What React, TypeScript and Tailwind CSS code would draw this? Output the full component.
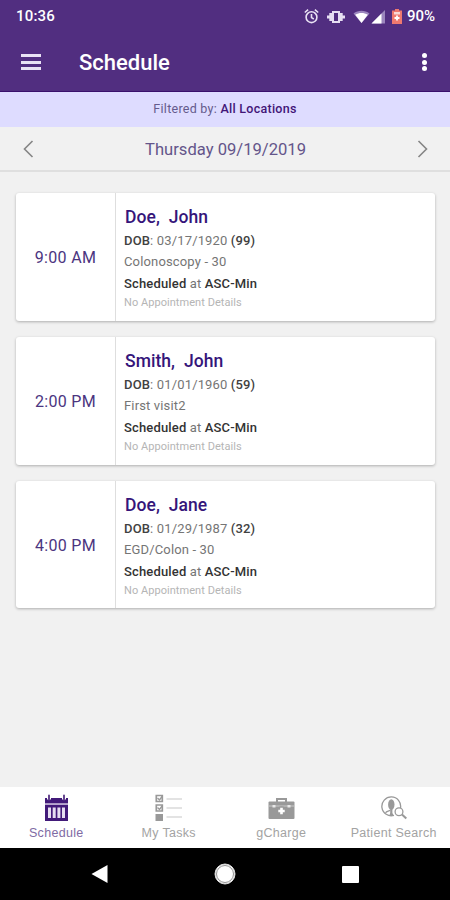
import type { ReactNode } from 'react'

const appointments = [
  { time: '9:00 AM', last: 'Doe', first: 'John', dob: '03/17/1920', age: 99, visit: 'Colonoscopy - 30' },
  { time: '2:00 PM', last: 'Smith', first: 'John', dob: '01/01/1960', age: 59, visit: 'First visit2' },
  { time: '4:00 PM', last: 'Doe', first: 'Jane', dob: '01/29/1987', age: 32, visit: 'EGD/Colon - 30' },
]

function StatusBar() {
  return (
    <div className="flex h-8 items-center justify-between pl-4 pr-[15px] pt-px text-[15px] font-medium text-white">
      <span className="tracking-[0.2px]">10:36</span>
      <div className="flex items-center">
        <svg width="15" height="16" viewBox="0 0 15 16" fill="none" stroke="#e9e2f4" strokeWidth="1.6">
          <circle cx="7.5" cy="8.2" r="5.4" />
          <path d="M7.5 5v3.6l2.3 1.4M.8 3.500l3.3-2.8M14.2 3.500l-3.3-2.8" />
        </svg>
        <svg className="ml-2 mr-px" width="18" height="16" viewBox="0 0 18 16">
          <path d="M5 2h8v12H5zM2.300 4H5v8H2.300zM13 4h2.700v8H13zM0 6.500h2.300v3H0zM15.700 6.500H18v3h-2.300z" fill="#e6def2" />
          <path d="M7 4h4v8H7z" fill="#512e80" />
        </svg>
        <svg className="ml-[7px]" width="17" height="14" viewBox="0 0 17 14">
          <path d="M.5 3.400C5 0 12 0 16.500 3.400L8.500 13z" fill="#9b86bd" />
          <path d="M2.200 4.800c4-2.300 8.600-2.300 12.600 0L8.500 13z" fill="#fff" />
        </svg>
        <svg className="ml-px" width="14" height="14" viewBox="0 0 14 14">
          <path d="M14 0v13.500H.5z" fill="#9b86bd" />
          <path d="M10.500 3.500v10H.5z" fill="#fff" />
        </svg>
        <svg className="ml-[7px] mr-[5px]" width="10" height="15" viewBox="0 0 10 15">
          <path d="M3 0h4v1.500h3V15H0V1.500h3z" fill="#ee796f" />
          <path d="M2 3h6v2.500H2z" fill="#f8d8d5" />
          <path d="M5 6.500v5M2.500 9h5" stroke="#fff" strokeWidth="1.800" />
        </svg>
        <span>90%</span>
      </div>
    </div>
  )
}

function Header() {
  return (
    <header className="flex h-[60px] items-center border-b border-[#39106c] pl-[21px] pr-[23px] pt-px">
      <div className="flex flex-col gap-[3.500px]">
        <span className="h-[3px] w-5 bg-[#e9e2f5]" />
        <span className="h-[3px] w-5 bg-[#e9e2f5]" />
        <span className="h-[3px] w-5 bg-[#e9e2f5]" />
      </div>
      <h1 className="ml-[38px] flex-1 pt-[2px] text-[22px] font-medium leading-none text-white">Schedule</h1>
      <div className="flex flex-col gap-[1.500px]">
        <span className="size-[5px] rounded-full bg-white" />
        <span className="size-[5px] rounded-full bg-white" />
        <span className="size-[5px] rounded-full bg-white" />
      </div>
    </header>
  )
}

function Chevron({ d }: { d: string }) {
  return (
    <svg width="11" height="18" viewBox="0 0 11 18" fill="none" stroke="#858585" strokeWidth="1.6">
      <path d={d} />
    </svg>
  )
}

function AppointmentCard({ item }: { item: (typeof appointments)[number] }) {
  return (
    <article className="flex h-[127.800px] rounded-[3px] bg-white shadow-[0_1px_3px_rgba(0,0,0,0.28)]">
      <div className="flex w-[100px] shrink-0 items-center justify-center border-r border-[#dedede] pt-[2.500px] text-[16px] tracking-[0.3px] text-[#4b3580]">
        {item.time}
      </div>
      <div className="whitespace-nowrap pl-2 text-[13px] tracking-[0.150px] text-[#757575]">
        <h2 className="mt-[13px] whitespace-pre pl-px text-[17.500px] font-medium leading-[22px] tracking-[0.050px] text-[#35157a]">
          {item.last},{'  '}{item.first}
        </h2>
        <p className="mt-[2px] leading-[21px]">
          <b className="font-medium text-[#414141]">DOB</b>: {item.dob}{' '}
          <b className="font-medium text-[#414141]">({item.age})</b>
        </p>
        <p className="leading-[22px]">{item.visit}</p>
        <p className="leading-[21px]">
          <b className="font-medium text-[#333]">Scheduled</b> at <b className="font-medium text-[#333]">ASC-Min</b>
        </p>
        <p className="text-[11px] leading-[18px] tracking-[0.050px] text-[#b5b5b5]">No Appointment Details</p>
      </div>
    </article>
  )
}

function CalendarIcon() {
  return (
    <svg width="25" height="28" viewBox="0 0 25 28">
      <path d="M1 4h23v5.500H1zM1 11h23v16H1z" fill="#421a79" />
      <path d="M1 9.500h23V11H1z" fill="#b8a7cf" />
      <path d="M3 3.500h4v2H3zM18 3.500h4v2h-4z" fill="#fff" />
      <path d="M5 1.500v4M20 1.500v4" stroke="#65458f" strokeWidth="2" strokeLinecap="round" />
      <path d="M4 13.500h3V24H4zM8.700 13.500h3V24h-3zM13.400 13.500h3V24h-3zM18 13.500h3V24h-3z" fill="#e6def0" />
    </svg>
  )
}

function TasksIcon() {
  return (
    <svg width="27" height="28" viewBox="0 0 27 28" fill="none" stroke="#999" strokeWidth="1.700">
      <path d="M1.300 1.500h6v6h-6zM1.300 11h6v6h-6z" />
      <path d="M2.500 4l2 2 3-4M2.500 13.500l2 2 3-4" strokeWidth="1.400" />
      <path d="M.500 20h7.500v7H.500z" fill="#999" stroke="none" />
      <path d="M11.500 5H27M11.500 14H27M11.500 23H27" stroke="#c8c8c8" strokeWidth="1.200" />
    </svg>
  )
}

function ChargeIcon() {
  return (
    <svg width="27" height="28" viewBox="0 0 27 28">
      <path d="M9 8V5h9v3" fill="none" stroke="#999" strokeWidth="2" />
      <path d="M1.500 7.500h24q1 0 1 1V24q0 1-1 1h-24q-1 0-1-1V8.500q0-1 1-1z" fill="#999" />
      <path d="M1 12h25" stroke="#c9c9c9" />
      <path d="M4.500 11h3v2.500h-3zM19.500 11h3v2.500h-3z" fill="#e8e8e8" />
      <circle cx="13.500" cy="17" r="4.800" fill="#999" />
      <path d="M13.500 13.800v6.400M10.300 17h6.400" stroke="#fff" strokeWidth="2.600" />
    </svg>
  )
}

function PatientSearchIcon() {
  return (
    <svg width="26" height="28" viewBox="0 0 26 28" fill="none" stroke="#999">
      <path d="M19.500 14A9.400 9.400 0 1 0 13 21.300" strokeWidth="1.300" />
      <ellipse cx="10.300" cy="10.500" rx="3.200" ry="5.300" fill="#999" stroke="none" />
      <path d="M9.200 15h2.200v4l1.300 2.500H8.500L9.200 19z" fill="#999" stroke="none" />
      <path d="M4.500 18.800c1-1.500 3-1.500 4.700-2.500" strokeWidth="1.200" />
      <circle cx="18" cy="17.800" r="3.900" strokeWidth="1.300" fill="#fff" />
      <path d="M21 20.500l4.300 4" strokeWidth="2" />
    </svg>
  )
}

function Tab({ label, active, children }: { label: string; active?: boolean; children: ReactNode }) {
  return (
    <div className={active ? 'flex flex-col items-center text-[#806ba4]' : 'flex flex-col items-center text-[#a3a3a3]'}>
      <div className="mt-[7px] h-7">{children}</div>
      <span className="mt-[3px] whitespace-nowrap font-['Liberation_Sans',sans-serif] text-[12.500px] leading-4 tracking-[0.300px]">{label}</span>
    </div>
  )
}

export default function App() {
  return (
    <div className="flex h-[900px] w-[450px] flex-col overflow-hidden bg-[#f1f1f1] font-[Roboto,sans-serif]">
      <div className="bg-[#512e80]">
        <StatusBar />
        <Header />
      </div>
      <div className="h-[35px] bg-[#dedcff] text-center text-[12.500px] leading-[34px] tracking-[0.270px] text-[#655b8c]">
        Filtered by: <b className="font-medium text-[#421577]">All Locations</b>
      </div>
      <div className="flex h-[45px] items-center justify-between border-b-2 border-[#dfdfdf] pl-[23px] pr-[22px] pt-px text-[#64558a]">
        <Chevron d="M9.500 1L1.500 9l8 8" />
        <span className="pt-[3px] text-[16.600px]">Thursday 09/19/2019</span>
        <Chevron d="M1.500 1l8 8-8 8" />
      </div>
      <main className="flex flex-1 flex-col gap-4 pl-4 pr-[15px] pt-[21px]">
        {appointments.map((item) => (
          <AppointmentCard key={item.time} item={item} />
        ))}
      </main>
      <nav className="grid h-[61px] grid-cols-4 bg-white">
        <Tab label="Schedule" active><CalendarIcon /></Tab>
        <Tab label="My Tasks"><TasksIcon /></Tab>
        <Tab label="gCharge"><ChargeIcon /></Tab>
        <Tab label="Patient Search"><PatientSearchIcon /></Tab>
      </nav>
      <div className="flex h-[52px] items-center justify-between bg-black pl-[91px] pr-[91px]">
        <svg width="17" height="18" viewBox="0 0 17 18">
          <path d="M16.500 0v18L.500 9z" fill="#fff" />
        </svg>
        <svg width="22" height="22" viewBox="0 0 22 22">
          <circle cx="11" cy="11" r="10" fill="#fff" stroke="#ddd" />
          <circle cx="11" cy="11" r="8.500" fill="#fff" stroke="#777" strokeWidth=".8" />
        </svg>
        <span className="size-[17px] rounded-[1px] bg-white" />
      </div>
    </div>
  )
}
